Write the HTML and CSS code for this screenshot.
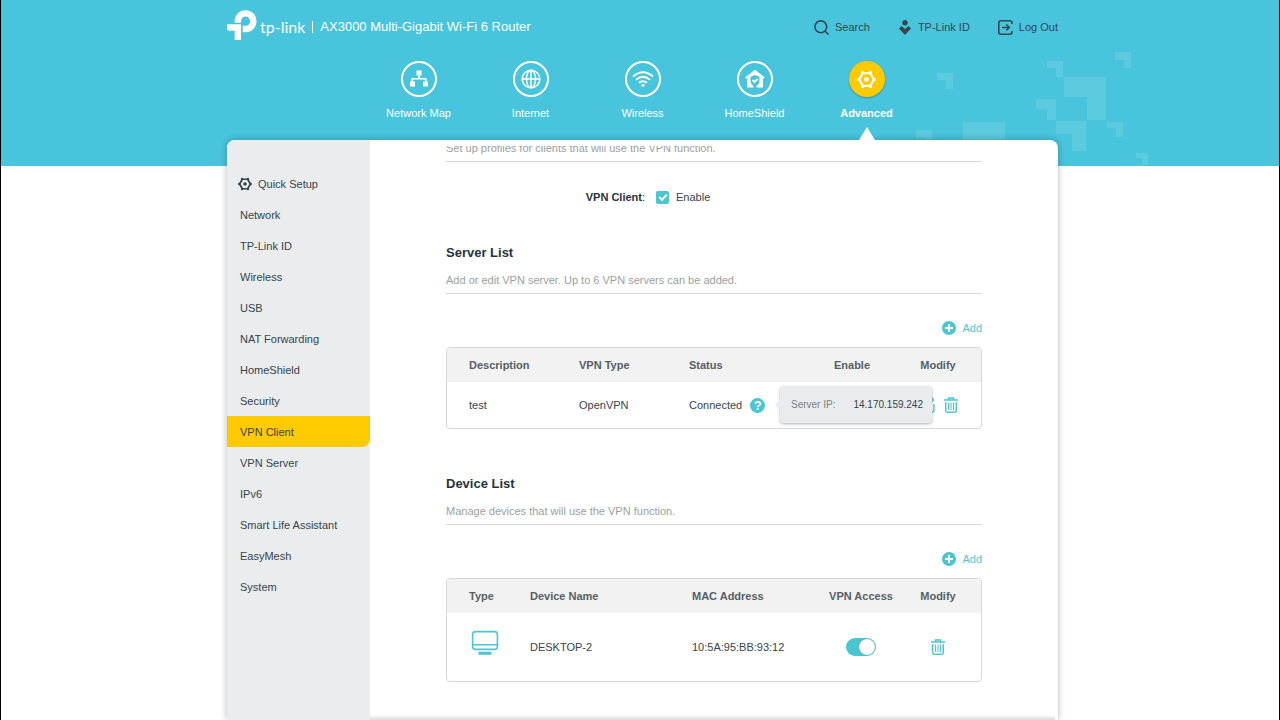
FILE: index.html
```html
<!DOCTYPE html>
<html lang="en">
<head>
    <meta charset="UTF-8">
    <meta name="viewport" content="width=device-width, initial-scale=1.0">
    <title>AX3000 Multi-Gigabit Wi-Fi 6 Router</title>
    <link rel="stylesheet" href="styles.css">
</head>
<body>
<svg class="sprite" aria-hidden="true">
    <symbol id="gear" viewBox="0 0 20 20">
        <path d="M6.200 3.200h7.600L17.700 10l-3.900 6.800H6.200L2.300 10z" fill="none" stroke="currentColor" stroke-width="2.400" stroke-linejoin="round"/>
        <g fill="currentColor">
            <circle cx="5.800" cy="2.700" r="1.700"/><circle cx="14.200" cy="2.700" r="1.700"/>
            <circle cx="5.800" cy="17.300" r="1.700"/><circle cx="14.200" cy="17.300" r="1.700"/>
            <circle cx="1.700" cy="10" r="1.700"/><circle cx="18.300" cy="10" r="1.700"/>
            <circle cx="10" cy="10" r="2.600"/>
        </g>
    </symbol>
    <symbol id="plus" viewBox="0 0 14 14">
        <circle cx="7" cy="7" r="7" fill="currentColor"/>
        <path d="M7 3v8M3 7h8" stroke="#fff" stroke-width="2"/>
    </symbol>
    <symbol id="trash" viewBox="0 0 14 16">
        <path d="M0 3h14M4.500 3V1h5v2M1.700 5v8.500q0 1.700 1.700 1.700h7.200q1.700 0 1.700-1.700V5" fill="none" stroke="currentColor" stroke-width="1.500"/>
        <path d="M4.500 5.500V13M7 5.500V13M9.500 5.500V13" stroke="currentColor" stroke-width="1.100"/>
    </symbol>
    <symbol id="edit" viewBox="0 0 16 16">
        <path d="M9 1.500H3q-2 0-2 2V13q0 2 2 2h10q2 0 2-2V7M6 10l1-3 6-6 1.500 2L9 9.500z" fill="none" stroke="currentColor" stroke-width="1.300"/>
    </symbol>
</svg>
<div class="page">
    <svg class="pattern" width="240" height="166" viewBox="910 0 240 166" aria-hidden="true">
        <path d="M937 73h16v16h-7v-9h-9zM1047 61h16v16h-7v-9h-9zM1115 52h16v16h-7v-8h-9zM1064 77h42v43h-19V97h-23zM1036 99h20v21h-9v-11h-11zM1056 121h30v30h-14v-17h-16zM1107 122h16v15h-7v-9h-9zM963 122h42v42h-19v-22h-23zM916 130h16v16h-6v-8h-10zM1136 153h12v12h-6v-7h-6z"/>
    </svg>
    <div class="wrap">
        <header class="top">
            <a class="logo" href="#">
                <svg width="30" height="34" viewBox="0 0 30 34" aria-hidden="true">
                    <path d="M10.800 12.700V11.300A7.800 7.800 0 1 1 18.600 19H15.700" fill="none" stroke="#fff" stroke-width="6.400"/>
                    <path d="M0 14.300h14V30H7.700v-9.300H2q-2 0-2-2z" fill="#fff"/>
                </svg>
                <span>tp-link</span>
            </a>
            <span class="divider"></span>
            <h1>AX3000 Multi-Gigabit Wi-Fi 6 Router</h1>
            <div class="tools">
                <a href="#">
                    <svg width="15" height="15" viewBox="0 0 15 15"><circle cx="6.800" cy="6.800" r="5.900"/><path d="M11 11l3.500 3.500"/></svg>
                    Search
                </a>
                <a href="#">
                    <svg class="solid" width="14" height="15" viewBox="0 0 14 15"><circle cx="7" cy="2.700" r="2.700"/><path d="M3.500 6L7 9l3.500-3L13 8.500 7 15 1 8.500z"/></svg>
                    TP-Link ID
                </a>
                <a href="#">
                    <svg width="15" height="15" viewBox="0 0 15 15"><path d="M14 4V3q0-2.200-2.200-2.200H3Q.8.800.8 3v9q0 2.200 2.200 2.200h8.800Q14 14.200 14 12v-1M4 7.500h7M8.300 4.500l3 3-3 3"/></svg>
                    Log Out
                </a>
            </div>
        </header>
        <nav class="main-nav">
            <a href="#">
                <span class="circle"><svg width="20" height="20" viewBox="0 0 20 20"><path d="M7.500 1.500h5v5h-1.700V9h6.700v3.500H19v5h-5v-5h2v-2H4v2h2v5H1v-5h1.500V9h6.700V6.500H7.500z" fill="#fff"/></svg></span>
                Network Map
            </a>
            <a href="#">
                <span class="circle"><svg width="20" height="20" viewBox="0 0 20 20" fill="none" stroke="#fff" stroke-width="1.500"><circle cx="10" cy="10" r="8.800"/><ellipse cx="10" cy="10" rx="4.500" ry="8.800"/><path d="M10 1v18M1 10h18"/></svg></span>
                Internet
            </a>
            <a href="#">
                <span class="circle"><svg width="22" height="20" viewBox="0 0 22 20" fill="none" stroke="#fff" stroke-width="1.900"><path d="M1 7.500q10-8.500 20 0M4 10.700q7-6 14 0M7 13.800q4-3.300 8 0"/><path d="M8.800 16q2.200-1.800 4.400 0L11 18.300z" fill="#fff" stroke="none"/></svg></span>
                Wireless
            </a>
            <a href="#">
                <span class="circle"><svg width="20" height="20" viewBox="0 0 20 20"><path fill-rule="evenodd" d="M10 .8l9.700 7.400-1 1.300H18V18.500H2V9.500h-.7l-1-1.300zM10 6L5.500 7.800V12q0 3.200 3 5v1.500h3V17q3-1.800 3-5V7.800z" fill="#fff"/><path d="M7.500 11l2 2 3.200-3" fill="none" stroke="#fff" stroke-width="1.800"/></svg></span>
                HomeShield
            </a>
            <a class="active" href="#">
                <span class="circle"><svg width="19" height="19"><use href="#gear"/></svg></span>
                Advanced
            </a>
        </nav>
        <div class="panel">
            <nav class="side">
                <a class="quick" href="#"><svg width="14" height="14"><use href="#gear"/></svg>Quick Setup</a>
                <a href="#">Network</a>
                <a href="#">TP-Link ID</a>
                <a href="#">Wireless</a>
                <a href="#">USB</a>
                <a href="#">NAT Forwarding</a>
                <a href="#">HomeShield</a>
                <a href="#">Security</a>
                <a class="active" href="#">VPN Client</a>
                <a href="#">VPN Server</a>
                <a href="#">IPv6</a>
                <a href="#">Smart Life Assistant</a>
                <a href="#">EasyMesh</a>
                <a href="#">System</a>
            </nav>
            <main class="content">
                <div class="scroller">
                    <section class="intro">
                        <p class="desc">Set up profiles for clients that will use the VPN function.</p>
                        <div class="field">
                            <span class="field-name"><b>VPN Client</b>:</span>
                            <input type="checkbox" id="vpn-client" checked>
                            <label for="vpn-client">Enable</label>
                        </div>
                    </section>
                    <section>
                        <h2>Server List</h2>
                        <p class="desc">Add or edit VPN server. Up to 6 VPN servers can be added.</p>
                        <button class="add" type="button"><svg width="14" height="14"><use href="#plus"/></svg>Add</button>
                        <table class="servers">
                            <thead>
                                <tr>
                                    <th class="col-text">Description</th>
                                    <th class="col-text">VPN Type</th>
                                    <th>Status</th>
                                    <th class="col-action">Enable</th>
                                    <th class="col-action">Modify</th>
                                </tr>
                            </thead>
                            <tbody>
                                <tr>
                                    <td>test</td>
                                    <td>OpenVPN</td>
                                    <td>
                                        <div class="status">
                                            Connected
                                            <button class="help" type="button">?</button>
                                            <div class="tooltip"><span>Server IP:</span><span class="ip">14.170.159.242</span></div>
                                        </div>
                                    </td>
                                    <td class="col-action"><input class="switch" type="checkbox" aria-label="Enable" checked></td>
                                    <td class="col-action">
                                        <div class="actions">
                                            <button type="button" aria-label="Edit"><svg width="16" height="16"><use href="#edit"/></svg></button>
                                            <button type="button" aria-label="Delete"><svg width="14" height="16"><use href="#trash"/></svg></button>
                                        </div>
                                    </td>
                                </tr>
                            </tbody>
                        </table>
                    </section>
                    <section>
                        <h2>Device List</h2>
                        <p class="desc">Manage devices that will use the VPN function.</p>
                        <button class="add" type="button"><svg width="14" height="14"><use href="#plus"/></svg>Add</button>
                        <table class="devices">
                            <thead>
                                <tr>
                                    <th class="col-type">Type</th>
                                    <th class="col-name">Device Name</th>
                                    <th>MAC Address</th>
                                    <th class="col-access">VPN Access</th>
                                    <th class="col-action">Modify</th>
                                </tr>
                            </thead>
                            <tbody>
                                <tr>
                                    <td class="col-type">
                                        <svg class="computer" width="28" height="26" viewBox="0 0 28 26"><rect x="1.600" y="1.600" width="24.800" height="17.800" rx="3"/><path d="M1.600 14.700h24.800"/><path d="M7.500 23.300h13" stroke-width="3"/></svg>
                                    </td>
                                    <td>DESKTOP-2</td>
                                    <td>10:5A:95:BB:93:12</td>
                                    <td class="col-access"><input class="switch" type="checkbox" aria-label="VPN Access" checked></td>
                                    <td class="col-action">
                                        <div class="actions">
                                            <button type="button" aria-label="Delete"><svg width="14" height="16"><use href="#trash"/></svg></button>
                                        </div>
                                    </td>
                                </tr>
                            </tbody>
                        </table>
                    </section>
                </div>
                <div class="bottom-bar"></div>
            </main>
        </div>
    </div>
</div>
</body>
</html>
```
FILE: styles.css
```css
* { box-sizing: border-box; }
body { margin: 0; font-family: "Liberation Sans", Arial, sans-serif; font-size: 11px; line-height: 20px; color: #36444b; }
a { color: inherit; text-decoration: none; }
button { border: 0; padding: 0; background: none; font: inherit; color: #4ac6d2; cursor: pointer; }
svg { display: block; flex: none; }
h1, h2, p { margin: 0; }
.sprite { position: absolute; width: 0; height: 0; }

.page { position: relative; height: 100vh; padding-left: 5px; overflow: hidden; border: solid #000; border-width: 0 1px; background: linear-gradient(#48c4dc 166px, #fff 166px); }
.pattern { position: absolute; top: 0; right: 129px; fill: rgba(255, 255, 255, 0.11); }
.wrap { position: relative; display: flex; flex-direction: column; width: 65%; min-width: 831px; height: 100%; margin: 0 auto; }

/* header */
.top { display: flex; align-items: center; height: 54px; color: #fff; }
.logo { display: flex; align-items: center; gap: 3px; font-family: Lato, sans-serif; font-size: 16px; }
.divider { width: 1px; height: 12px; margin: 0 7px; background: #fff; }
h1 { font-size: 13px; font-weight: normal; }
.tools { display: flex; gap: 28px; margin-left: auto; color: #36474f; }
.tools a { display: flex; align-items: center; gap: 6px; }
.tools svg { fill: none; stroke: currentColor; stroke-width: 1.6; }
.tools .solid { fill: currentColor; stroke: none; }

.main-nav { display: flex; justify-content: center; padding-top: 7px; color: #fff; }
.main-nav a { position: relative; display: flex; flex-direction: column; align-items: center; gap: 6px; width: 112px; padding-bottom: 17px; }
.circle { display: flex; align-items: center; justify-content: center; width: 36px; height: 36px; border: 2px solid #fff; border-radius: 50%; }
.main-nav .active { font-weight: bold; }
.main-nav .active .circle { border: 0; background: #ffca00; box-shadow: 0 1px 2px rgba(0, 0, 0, 0.25); }
.main-nav .active::after { content: ""; position: absolute; bottom: 0; left: 48px; border: 8px solid transparent; border-top: 0; border-bottom: 13px solid #fff; }

/* panel */
.panel { flex: 1; min-height: 0; display: flex; background: #fff; border-radius: 8px 8px 0 0; box-shadow: 0 0 7px rgba(0, 0, 0, 0.28); }
.side { width: 143px; padding-top: 28px; background: #eaecee; border-radius: 8px 0 0 0; }
.side a { display: flex; align-items: center; height: 31px; padding-left: 13px; }
.side .quick { gap: 6px; padding-left: 11px; }
.side .active { background: #ffca00; border-radius: 0 0 8px 0; }

.content { flex: 1; display: flex; flex-direction: column; padding-top: 6px; }
.scroller { flex: 1; min-height: 0; overflow: hidden; padding: 0 76px; }
.intro { margin-top: -8px; }
.bottom-bar { height: 5px; margin-right: 3px; background: linear-gradient(#fff, #d8dcdd); }
section { margin-bottom: 45px; }
.intro { margin-bottom: 36px; }
h2 { margin-bottom: 7px; font-size: 13px; line-height: 20px; color: #26333c; }
.desc { padding-bottom: 3px; border-bottom: 1px solid #d5d8d9; color: #9c9fa1; }
.field { display: flex; align-items: center; margin-top: 25px; }
.field-name { width: 199px; margin-right: 11px; text-align: right; color: #26333c; }
.field input { appearance: none; width: 13px; height: 13px; margin: 0 7px 0 0; border-radius: 2px; background: #4ac6d2; display: grid; place-items: center; }
.field input:checked::after { content: ""; width: 6px; height: 3px; border: solid #fff; border-width: 0 0 2px 2px; transform: rotate(-45deg); margin-bottom: 2px; }
.add { display: flex; align-items: center; gap: 6px; margin: 24px 0 9px auto; }

/* tables */
table { width: 100%; table-layout: fixed; border: 1px solid #d5d8d9; border-radius: 4px; border-spacing: 0; overflow: hidden; }
th { height: 34px; padding: 0 0 0 22px; background: #f2f2f2; text-align: left; color: #566066; }
td { height: 46px; padding: 0 0 0 22px; }
.devices td { height: 68px; }
.col-text { width: 110px; }
.col-type { width: 61px; }
.col-name { width: 162px; }
.col-access { width: 68px; padding: 0; text-align: center; }
.col-action { width: 86px; padding: 0; text-align: center; }
.computer { fill: none; stroke: #4ac6d2; stroke-width: 1.6; margin: 0 0 8px 2px; }
.actions { display: flex; justify-content: center; gap: 9px; }
.status { position: relative; display: flex; align-items: center; gap: 8px; }
.help { width: 15px; height: 15px; border-radius: 50%; background: #4ac6d2; color: #fff; font-size: 13px; line-height: 15px; font-weight: bold; }
.tooltip { position: absolute; z-index: 1; left: 91px; top: -9px; display: flex; align-items: center; gap: 18px; height: 37px; padding: 0 9px 0 11px; border-radius: 4px; background: #e9ebed; box-shadow: 0 1px 3px rgba(0, 0, 0, 0.3); font-size: 10px; white-space: nowrap; color: #788085; }
.tooltip::before { content: ""; position: absolute; left: -5px; top: 14px; border: 5px solid transparent; border-left: 0; border-right-color: #e9ebed; }
.ip { color: #36444b; }
.switch { appearance: none; display: block; width: 30px; height: 18px; margin: 0 auto; padding: 1px; border-radius: 9px; background: #4ac6d2; }
.switch::after { content: ""; display: block; width: 16px; height: 16px; margin-left: auto; border-radius: 50%; background: #fff; box-shadow: 0 0 1px rgba(0, 0, 0, 0.5); }
```
